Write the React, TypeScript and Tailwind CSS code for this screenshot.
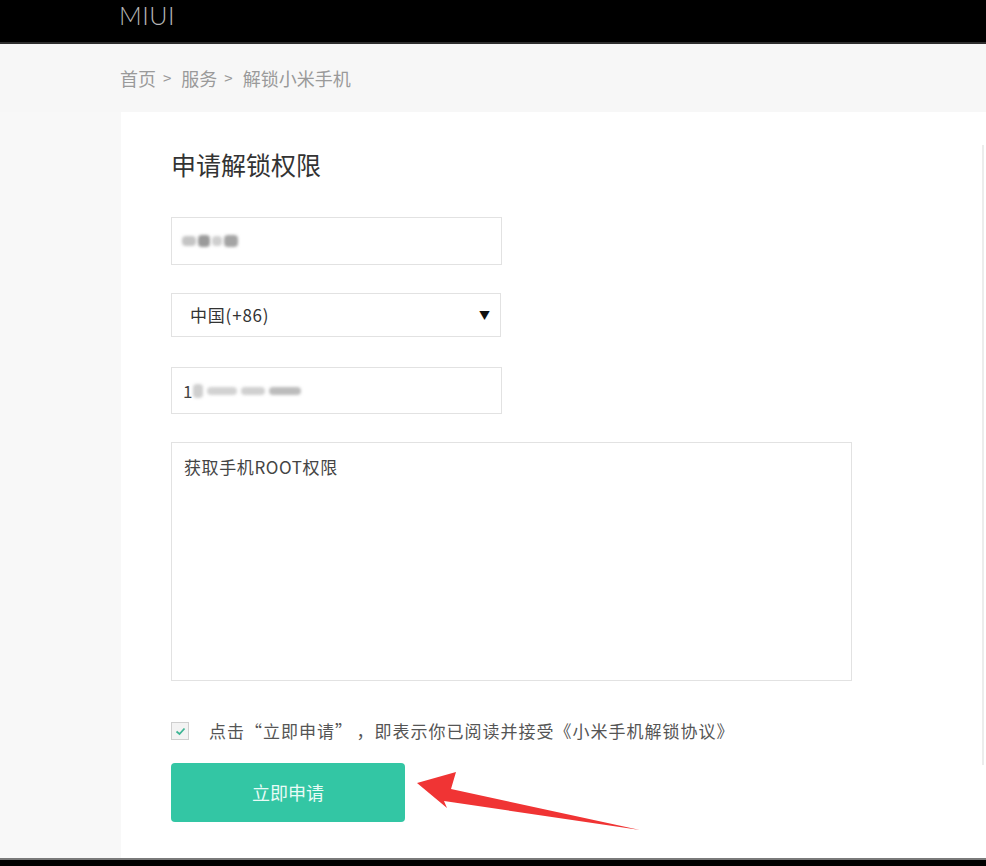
import React from "react";

const cjk = { fontFamily: '"Noto Sans CJK SC", "Noto Sans", sans-serif' };

const Blur = ({ className }: { className: string }) => (
  <div className={"rounded-sm blur-[1.5px] " + className} />
);

export default function App() {
  return (
    <div className="relative flex h-[866px] w-[986px] flex-col overflow-hidden bg-[#f7f7f7]" style={cjk}>
      {/* Header */}
      <header className="h-[44px] shrink-0 border-b-2 border-[#2e2e2e] bg-black pl-[119px]">
        <div
          className="mt-[1px] text-[25px] font-light leading-[28px] tracking-[0.5px] text-[#b5b5b5]"
          style={{ fontFamily: "Lato, sans-serif" }}
        >
          MIUI
        </div>
      </header>

      {/* Breadcrumb */}
      <div className="flex h-[68px] shrink-0 items-center pl-[120px] text-[18px] text-[#9a9a9a]">
        <span>首页</span>
        <span className="ml-[7px] mr-[10px] text-[15px]">&gt;</span>
        <span>服务</span>
        <span className="ml-[7px] mr-[10px] text-[15px]">&gt;</span>
        <span>解锁小米手机</span>
      </div>

      {/* Main */}
      <div className="flex flex-1">
        <div className="w-[121px] shrink-0 bg-[#f8f8f8]" />
        <div className="flex flex-1 bg-white">
          <div className="flex-1 pl-[50px] pt-[36px]">
            <h1 className="text-[25px] font-normal leading-[32px] text-[#333]">申请解锁权限</h1>

            <div className="mt-[37px] flex h-[48px] w-[331px] items-center border border-[#e2e2e2] pl-[10px]">
              <Blur className="h-[10px] w-[14px] bg-[#c4c4c4]" />
              <Blur className="ml-[2px] h-[12px] w-[12px] bg-[#9a9a9a]" />
              <Blur className="ml-[2px] h-[10px] w-[10px] bg-[#cfcfcf]" />
              <Blur className="ml-[2px] h-[12px] w-[14px] bg-[#a4a4a4]" />
            </div>

            <div className="mt-[28px] flex h-[44px] w-[330px] items-center justify-between border border-[#e2e2e2] pl-[18px] pr-[10px]">
              <span className="text-[17px] tracking-[0.8px] text-[#333]">中国(+86)</span>
              <span className="text-[11px] text-[#111]">▼</span>
            </div>

            <div className="mt-[30px] flex h-[47px] w-[331px] items-center border border-[#e2e2e2] pl-[11px]">
              <span className="text-[17px] text-[#444]">1</span>
              <Blur className="ml-[1px] h-[14px] w-[10px] bg-[#cfcfcf]" />
              <Blur className="ml-[4px] h-[8px] w-[30px] bg-[#d2d2d2]" />
              <Blur className="ml-[4px] h-[8px] w-[24px] bg-[#d0d0d0]" />
              <Blur className="ml-[4px] h-[8px] w-[32px] bg-[#bcbcbc]" />
            </div>

            <div className="mt-[28px] h-[239px] w-[681px] border border-[#e2e2e2] px-[12px] pt-[11px]">
              <span className="text-[17px] tracking-[0.6px] text-[#444]">获取手机ROOT权限</span>
            </div>

            <div className="mt-[41px] flex h-[18px] items-center">
              <div className="flex h-[18px] w-[18px] items-center justify-center border border-[#cfcfcf] bg-[#f3f3f3]">
                <svg width="11" height="9" viewBox="0 0 11 9" fill="none">
                  <path d="M1.5 4.5 L4.5 7 L9.5 1.5" stroke="#3fb595" strokeWidth="1.8" />
                </svg>
              </div>
              <span className="ml-[20px] whitespace-nowrap text-[17px] tracking-[1px] text-[#555]">
                点击<span>“立即申请”</span>
                <span className="ml-[12px]">，即表示你已阅读并接受《小米手机解锁协议》</span>
              </span>
            </div>

            <button className="mt-[23px] flex h-[59px] w-[234px] items-center justify-center rounded-[4px] bg-[#33c6a4] text-[18px] text-[#e9fbf6]">
              立即申请
            </button>
          </div>
          <div className="mr-[2px] w-[2px]">
            <div className="mt-[33px] h-[620px] bg-[#ececec]" />
          </div>
        </div>
      </div>

      {/* Bottom bar */}
      <div className="h-[8px] shrink-0 border-t-2 border-[#7a7a7a] bg-black" />

      {/* Annotation arrow */}
      <svg className="pointer-events-none absolute left-0 top-0" width="986" height="866">
        <polygon
          points="417,783 456,772 451,789 640,830 444,801 447,808"
          fill="#f03434"
          style={{ filter: "blur(0.6px)" }}
        />
      </svg>
    </div>
  );
}
